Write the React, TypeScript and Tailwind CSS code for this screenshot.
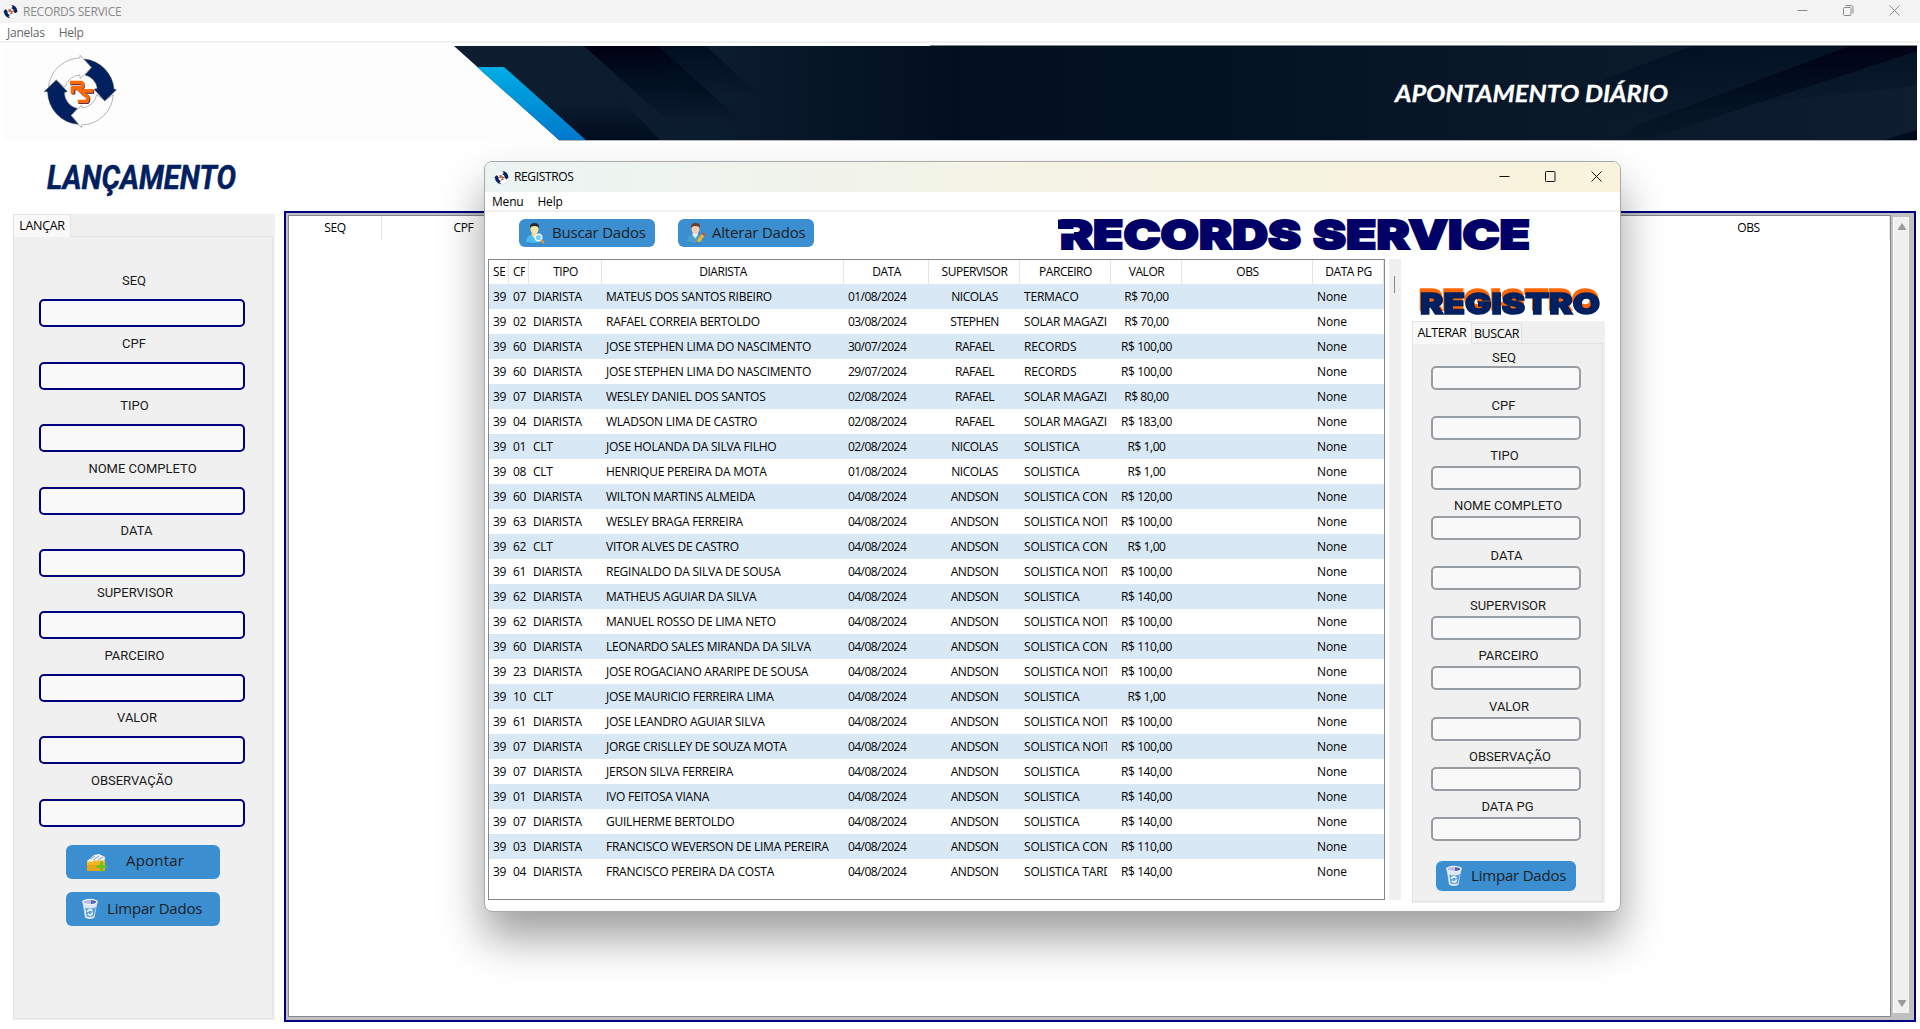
import React from "react";

const leftFields = [
  { label: "SEQ", shift: "pr-4", gap: "mb-2" },
  { label: "CPF", shift: "pr-4", gap: "mb-[7px]" },
  { label: "TIPO", shift: "pr-[15px]", gap: "mb-2" },
  { label: "NOME COMPLETO", shift: "pl-px", gap: "mb-[7px]" },
  { label: "DATA", shift: "pr-[11px]", gap: "mb-[7px]" },
  { label: "SUPERVISOR", shift: "pr-[14px]", gap: "mb-2" },
  { label: "PARCEIRO", shift: "pr-[15px]", gap: "mb-[7px]" },
  { label: "VALOR", shift: "pr-[10px]", gap: "mb-2" },
  { label: "OBSERVAÇÃO", shift: "pr-[20px]", gap: "mb-[18px]" },
];

const rightFields = [
  { label: "SEQ", shift: "pr-1", gap: "mb-2" },
  { label: "CPF", shift: "pr-[5px]", gap: "mb-2" },
  { label: "TIPO", shift: "pr-[3px]", gap: "mb-2" },
  { label: "NOME COMPLETO", shift: "pl-1", gap: "mb-2" },
  { label: "DATA", shift: "pl-px", gap: "mb-2" },
  { label: "SUPERVISOR", shift: "pl-1", gap: "mb-2" },
  { label: "PARCEIRO", shift: "pl-[5px]", gap: "mb-[9px]" },
  { label: "VALOR", shift: "pl-[6px]", gap: "mb-2" },
  { label: "OBSERVAÇÃO", shift: "pl-2", gap: "mb-2" },
  { label: "DATA PG", shift: "pl-[3px]", gap: "mb-2" },
];

const rows: string[][] = [
  ["07", "DIARISTA", "MATEUS DOS SANTOS RIBEIRO", "01/08/2024", "NICOLAS", "TERMACO", "70,00"],
  ["02", "DIARISTA", "RAFAEL CORREIA BERTOLDO", "03/08/2024", "STEPHEN", "SOLAR MAGAZI", "70,00"],
  ["60", "DIARISTA", "JOSE STEPHEN LIMA DO NASCIMENTO", "30/07/2024", "RAFAEL", "RECORDS", "100,00"],
  ["60", "DIARISTA", "JOSE STEPHEN LIMA DO NASCIMENTO", "29/07/2024", "RAFAEL", "RECORDS", "100,00"],
  ["07", "DIARISTA", "WESLEY DANIEL DOS SANTOS", "02/08/2024", "RAFAEL", "SOLAR MAGAZI", "80,00"],
  ["04", "DIARISTA", "WLADSON LIMA DE CASTRO", "02/08/2024", "RAFAEL", "SOLAR MAGAZI", "183,00"],
  ["01", "CLT", "JOSE HOLANDA DA SILVA FILHO", "02/08/2024", "NICOLAS", "SOLISTICA", "1,00"],
  ["08", "CLT", "HENRIQUE PEREIRA DA MOTA", "01/08/2024", "NICOLAS", "SOLISTICA", "1,00"],
  ["60", "DIARISTA", "WILTON MARTINS ALMEIDA", "04/08/2024", "ANDSON", "SOLISTICA CON", "120,00"],
  ["63", "DIARISTA", "WESLEY BRAGA FERREIRA", "04/08/2024", "ANDSON", "SOLISTICA NOIT", "100,00"],
  ["62", "CLT", "VITOR ALVES DE CASTRO", "04/08/2024", "ANDSON", "SOLISTICA CON", "1,00"],
  ["61", "DIARISTA", "REGINALDO DA SILVA DE SOUSA", "04/08/2024", "ANDSON", "SOLISTICA NOIT", "100,00"],
  ["62", "DIARISTA", "MATHEUS AGUIAR DA SILVA", "04/08/2024", "ANDSON", "SOLISTICA", "140,00"],
  ["62", "DIARISTA", "MANUEL ROSSO DE LIMA NETO", "04/08/2024", "ANDSON", "SOLISTICA NOIT", "100,00"],
  ["60", "DIARISTA", "LEONARDO SALES MIRANDA DA SILVA", "04/08/2024", "ANDSON", "SOLISTICA CON", "110,00"],
  ["23", "DIARISTA", "JOSE ROGACIANO ARARIPE DE SOUSA", "04/08/2024", "ANDSON", "SOLISTICA NOIT", "100,00"],
  ["10", "CLT", "JOSE MAURICIO FERREIRA LIMA", "04/08/2024", "ANDSON", "SOLISTICA", "1,00"],
  ["61", "DIARISTA", "JOSE LEANDRO AGUIAR SILVA", "04/08/2024", "ANDSON", "SOLISTICA NOIT", "100,00"],
  ["07", "DIARISTA", "JORGE CRISLLEY DE SOUZA MOTA", "04/08/2024", "ANDSON", "SOLISTICA NOIT", "100,00"],
  ["07", "DIARISTA", "JERSON SILVA FERREIRA", "04/08/2024", "ANDSON", "SOLISTICA", "140,00"],
  ["01", "DIARISTA", "IVO FEITOSA VIANA", "04/08/2024", "ANDSON", "SOLISTICA", "140,00"],
  ["07", "DIARISTA", "GUILHERME BERTOLDO", "04/08/2024", "ANDSON", "SOLISTICA", "140,00"],
  ["03", "DIARISTA", "FRANCISCO WEVERSON DE LIMA PEREIRA", "04/08/2024", "ANDSON", "SOLISTICA CON", "110,00"],
  ["04", "DIARISTA", "FRANCISCO PEREIRA DA COSTA", "04/08/2024", "ANDSON", "SOLISTICA TARD", "140,00"],
];

const headers = [
  { t: "SEQ", c: "text-left" },
  { t: "CPF", c: "text-left" },
  { t: "TIPO", c: "text-center" },
  { t: "DIARISTA", c: "text-center" },
  { t: "DATA", c: "text-center" },
  { t: "SUPERVISOR", c: "text-center" },
  { t: "PARCEIRO", c: "text-center" },
  { t: "VALOR", c: "text-center" },
  { t: "OBS", c: "text-center" },
  { t: "DATA PG", c: "text-center" },
];

const GRID = "grid grid-cols-[20px_20px_73px_242px_85px_91px_91px_71px_131px_71px]";

function Logo({ className }: { className: string }) {
  return (
    <svg className={className} viewBox="130 162 226 226">
      <g fill="#fdfdfd" stroke="#a6a6a6" strokeWidth="2.5" strokeLinejoin="round">
        <path d="M146 262 A98 98 0 0 1 241 174 L242 166 L276 203 L242 236 L241 225 A50 50 0 0 0 196 262 L170 240 Z" />
        <path d="M342 284 A98 98 0 0 1 247 376 L246 384 L214 347 L247 316 L248 325 A50 50 0 0 0 292 284 L316 303 Z" />
      </g>
      <g fill="#002060" stroke="#3c3c46" strokeWidth="1.5">
        <path d="M254 177 A100 100 0 0 1 344 268 L351 270 L316 303 L284 268 L294 266 A50 50 0 0 0 257 225 L277 203 Z" />
        <path d="M236 374 A100 100 0 0 1 144 276 L134 275 L170 241 L203 275 L194 278 A50 50 0 0 0 233 326 L214 347 Z" />
      </g>
      <g fill="none" strokeWidth="11" strokeLinejoin="round">
        <path stroke="#3a1a60" d="M213 251 H248 Q256 260 246 266 H222 V284 M238 268 L254 284 M284 276 H256 Q250 284 262 289 Q272 295 264 307 H237" />
        <path stroke="#ff6a00" d="M211 248 H246 Q256 257 245 264 H219 V282 M236 266 L252 280 M282 273 H254 Q247 282 260 287 Q270 293 262 305 H235" />
      </g>
    </svg>
  );
}

function UserIcon({ kind }: { kind: "search" | "edit" }) {
  const edit = kind === "edit";
  return (
    <svg className="h-[22px] w-5" viewBox="0 0 20 22">
      <ellipse cx="9" cy="20.6" rx="8" ry="1" fill="#2a6ca4" opacity=".5" />
      <path d="M1 20 Q1 14 6.500 13 L9 15 L12 13 Q17 14 17 20 Q9 22 1 20Z" fill={edit ? "#4b9fc9" : "#46bdf0"} />
      <path d="M6.500 13 L9.200 16.500 L12 13 L11.500 10 H7Z" fill={edit ? "#e8eef2" : "#f0d98a"} />
      <ellipse cx="9.500" cy="7" rx="4" ry="5" fill={edit ? "#f3cdb2" : "#f6e6a2"} />
      <path d="M5 6 Q4.500 1 9.500 1 Q14.500 1 14 6 Q12.500 3.800 9.500 4 Q6.500 3.800 5 6Z" fill={edit ? "#6b3a2a" : "#22282c"} />
      {edit ? (
        <g>
          <path d="M17 10.500 L19.500 12.500 L13.500 20 L11 20.800 L11.200 18Z" fill="#f7b52c" />
          <path d="M17 10.500 L19.500 12.500 L18.300 14 L15.800 12Z" fill="#c93a2c" />
          <path d="M11 20.800 L11.100 19.300 L12.400 20.300Z" fill="#333" />
        </g>
      ) : (
        <g>
          <circle cx="13.500" cy="15.500" r="3.300" fill="#6fd0f5" stroke="#eef4f8" strokeWidth="1.500" />
          <path d="M16 18 L19 21.300" stroke="#e59a35" strokeWidth="2" />
        </g>
      )}
    </svg>
  );
}

function BinIcon() {
  return (
    <svg className="h-[22px] w-[18px]" viewBox="0 0 18 22">
      <path d="M1.500 3.500 L4 19.500 Q9 22.500 13.500 19.500 L16.500 3.500Z" fill="#dfe6f2" />
      <path d="M3 9 L4.600 18 Q9 20 13 18 L15 9 Q9 12 3 9Z" fill="#5f9fd8" />
      <path d="M6.500 14 Q7 11.500 9.500 11.800 L11.500 13 M11.500 14.500 Q11 17.300 8.500 17 L6.800 15.800" stroke="#f2f7fc" strokeWidth="1.500" fill="none" />
      <ellipse cx="9" cy="3.800" rx="8" ry="3" fill="#eef0f8" />
      <ellipse cx="9" cy="3.900" rx="6.500" ry="2" fill="#b9bfe0" />
      <path d="M10 2.200 Q15.500 2.500 15.300 4.500 Q13 6 10 5.900Z" fill="#5661b0" />
      <path d="M3.500 8 L5 18" stroke="#fff" strokeWidth="1" />
    </svg>
  );
}

function FolderIcon() {
  return (
    <svg className="h-[19px] w-[21px]" viewBox="0 0 21 19">
      <path d="M1 8 L8 2 L13 1 L19 4 L18 12 H2Z" fill="#eef1f4" />
      <path d="M4 6 L9 3 M7 7 L13 3 M12 7 L17 4" stroke="#8fa3b5" strokeWidth="1" />
      <path d="M1 8.500 L6 9 L8 7.500 H19 V17 Q19 18 18 18 H2 Q1 18 1 17Z" fill="#f2b725" />
      <path d="M1 12 H19 V17 Q19 18 18 18 H2 Q1 18 1 17Z" fill="#e8a51a" />
      <path d="M15.500 8.500 V18.500 M10.500 13.500 H20.500" stroke="#6cc21c" strokeWidth="3" />
    </svg>
  );
}

function WindowControls({ color, restored }: { color: string; restored: boolean }) {
  return (
    <div className="flex items-center gap-[35px]">
      <svg className="h-[11px] w-[11px]" viewBox="0 0 11 11" stroke={color} fill="none">
        <path d="M0.500 5.500 H10.500" />
      </svg>
      <svg className="h-[11px] w-[11px]" viewBox="0 0 11 11" stroke={color} fill="none">
        {restored ? (
          <>
            <rect x="0.500" y="2.500" width="7.500" height="8" rx="1" />
            <path d="M2.500 0.500 H8 Q10 0.500 10 2.500 V8.500" />
          </>
        ) : (
          <rect x="0.500" y="0.500" width="9.500" height="10" rx="0.800" />
        )}
      </svg>
      <svg className="h-[11px] w-[11px]" viewBox="0 0 11 11" stroke={color} fill="none">
        <path d="M0.500 0.500 L10.500 10.500 M10.500 0.500 L0.500 10.500" />
      </svg>
    </div>
  );
}

function Banner() {
  return (
    <svg className="block h-[96px] w-[1914px]" viewBox="3 45 1914 96">
      <defs>
        <linearGradient id="base" x1="454" x2="1917" y1="0" y2="0" gradientUnits="userSpaceOnUse">
          <stop offset="0" stopColor="#0e1e30" />
          <stop offset=".18" stopColor="#0b1c2e" />
          <stop offset=".34" stopColor="#020f1f" />
          <stop offset=".5" stopColor="#031221" />
          <stop offset=".64" stopColor="#061626" />
          <stop offset=".8" stopColor="#0a1a2b" />
          <stop offset="1" stopColor="#0e1e30" />
        </linearGradient>
        <linearGradient id="cyan" x1="0" x2="0" y1="0" y2="1">
          <stop offset="0" stopColor="#00ade4" />
          <stop offset="1" stopColor="#0078cc" />
        </linearGradient>
        <linearGradient id="down" x1="0" x2="0" y1="0" y2="1">
          <stop offset="0" stopColor="#000012" />
          <stop offset=".5" stopColor="#000f20" stopOpacity=".85" />
          <stop offset="1" stopColor="#000f20" stopOpacity="0" />
        </linearGradient>
        <linearGradient id="soft" x1="0" x2="0" y1="0" y2="1">
          <stop offset="0" stopColor="#000e20" />
          <stop offset="1" stopColor="#000e20" stopOpacity="0" />
        </linearGradient>
        <linearGradient id="up" x1="0" x2="0" y1="1" y2="0">
          <stop offset="0" stopColor="#000d1e" />
          <stop offset="1" stopColor="#000d1e" stopOpacity="0" />
        </linearGradient>
      </defs>
      <rect x="3" y="45" width="1914" height="96" fill="#fdfdfd" />
      <path d="M454 46 H1917 V140 H559Z" fill="url(#base)" />
      <path d="M477 67 H504 L586 140 H559Z" fill="url(#cyan)" />
      <path d="M541 100 H622 L660 140 H586Z" fill="url(#up)" />
      <path d="M584 46 H658 L745 124 H671Z" fill="url(#down)" />
      <path d="M634 46 H658 L718 100 H694Z" fill="url(#down)" />
      <path d="M658 46 H706 L760 96 H714Z" fill="url(#soft)" />
      <path d="M1692 46 H1917 V86 L1600 120 L1570 92Z" fill="url(#soft)" opacity=".75" />
      <path d="M1850 46 H1917 V51 L1600 155 L1640 124Z" fill="url(#down)" opacity=".9" />
      <path d="M1884 140 L1917 130 V140Z" fill="#000c1c" />
      <path d="M930 45.500 H1917" stroke="#80858c" />
      <path d="M559 140.500 H1917" stroke="#b4b9c0" />
      <text x="1395" y="102" fill="#fff" fontFamily="Lato, sans-serif" fontWeight="700" fontStyle="italic" fontSize="23" stroke="#fff" strokeWidth=".3" textLength="273" lengthAdjust="spacingAndGlyphs">
        APONTAMENTO DIÁRIO
      </text>
    </svg>
  );
}

function HeroTitle() {
  return (
    <svg className="h-[36px] w-[480px] overflow-visible" viewBox="1056 217 480 36" fill="#000066">
      <g fontFamily="Inter, sans-serif" fontWeight="900" fontSize="40" stroke="#000066" strokeWidth="2">
        <text x="1060" y="249" textLength="241" lengthAdjust="spacingAndGlyphs">RECORDS</text>
        <text x="1313" y="249" textLength="217" lengthAdjust="spacingAndGlyphs">SERVICE</text>
      </g>
      <rect x="1058" y="219.500" width="12" height="9.500" />
      <rect x="1057" y="229" width="17" height="4.500" fill="#fff" />
    </svg>
  );
}

function RegistroTitle() {
  return (
    <svg className="block h-[30px] w-[186px] overflow-visible" viewBox="1416 286 186 30">
      <g className="drop-shadow-[-1px_-4px_0_#ff6600]" fill="#002060">
        <text x="1420" y="314" stroke="#002060" strokeWidth="1.500" fontFamily="Inter, sans-serif" fontWeight="900" fontSize="29" textLength="180" lengthAdjust="spacingAndGlyphs">
          REGISTRO
        </text>
      </g>
    </svg>
  );
}

function ActionButton({ className, children }: { className: string; children: React.ReactNode }) {
  return (
    <button className={`flex shrink-0 items-center rounded-[6px] bg-[#3b8ed0] text-[15px] leading-none tracking-[-0.200px] whitespace-nowrap text-[#1b1f24] ${className}`}>
      {children}
    </button>
  );
}

export default function App() {
  return (
    <div className="relative h-[1029px] w-[1920px] overflow-hidden bg-white font-['Open_Sans','Noto_Sans',sans-serif] text-black">
      <header className="flex h-[23px] items-center justify-between bg-[#f3f3f3] pr-5 pl-[3px]">
        <div className="flex items-center gap-[5px]">
          <Logo className="h-[15px] w-[15px]" />
          <span className="text-xs tracking-[-0.250px] text-[#8a8a8a]">RECORDS SERVICE</span>
        </div>
        <div className="-mt-[3px]">
          <WindowControls color="#8a8a8a" restored />
        </div>
      </header>
      <nav className="flex h-5 items-center gap-[14px] border-b-2 border-[#f0f0f0] pt-[2px] pl-[7px] text-xs tracking-[-0.250px] text-[#666]">
        <span>Janelas</span>
        <span>Help</span>
      </nav>
      <div className="relative mt-0.5 pl-[3px]">
        <Banner />
        <Logo className="absolute top-[9px] left-[43px] h-[75px] w-[75px]" />
      </div>
      <div className="flex h-[70px] pt-[18px] pl-[44px]">
        <svg className="h-[40px] w-[200px] overflow-visible" viewBox="44 159 200 40">
          <text x="47" y="189" fill="#002060" stroke="#002060" strokeWidth=".5" fontFamily="Roboto, sans-serif" fontWeight="700" fontStyle="italic" fontSize="34" textLength="189" lengthAdjust="spacingAndGlyphs">
            LANÇAMENTO
          </text>
        </svg>
      </div>

      <main className="flex gap-[9px] pl-[13px]">
        <aside className="mt-[3px] flex h-[806px] w-[262px] flex-col bg-[#f0f0f0]">
          <div className="z-10 flex h-[23px] w-[58px] items-center justify-center border border-b-0 border-[#e3e3e3] bg-[#f9f9f9] text-[12.500px] tracking-[-0.300px]">
            LANÇAR
          </div>
          <div className="-mt-px mr-0.5 mb-px flex flex-1 flex-col items-start border border-[#e3e3e3] pt-[35px] pl-[25px]">
            {leftFields.map((f) => (
              <div key={f.label} className={f.gap}>
                <div className={`h-[27px] w-[206px] text-center font-['Roboto'] text-[13px] leading-[18px] text-[#1a1a1a] ${f.shift}`}>
                  {f.label}
                </div>
                <div className="h-7 w-[206px] rounded-[5px] border-2 border-[#000080] bg-[#f9f9fa]" />
              </div>
            ))}
            <ActionButton className="mb-[13px] ml-[27px] h-[34px] w-[154px] pl-5">
              <FolderIcon />
              <span className="-mt-1 ml-[19px] tracking-[0.200px]">Apontar</span>
            </ActionButton>
            <ActionButton className="ml-[27px] h-[34px] w-[154px] pl-[15px]">
              <BinIcon />
              <span className="-mt-0.5 ml-[8px]">Limpar Dados</span>
            </ActionButton>
          </div>
        </aside>

        <section className="flex h-[811px] w-[1632px] border-2 border-[#000080] bg-[#c0c0c0] pt-0.5 pb-[3px] pl-0.5">
          <div className="flex h-[802px] w-[1603px] border border-[#828790] bg-white text-xs tracking-[-0.400px]">
            <div className="flex h-6 w-[93px] items-center justify-center border-r border-[#e5e5e5]">SEQ</div>
            <div className="flex h-6 w-[163px] items-center justify-center">CPF</div>
            <div className="h-6 flex-1" />
            <div className="flex h-6 w-[282px] items-center justify-center border-r border-[#e5e5e5]">OBS</div>
          </div>
          <div className="mt-0.5 ml-0.5 flex h-[796px] w-4 flex-col items-center justify-between border-l border-white bg-[#f0f0f0] py-[6px]">
            <svg className="h-[7px] w-2" viewBox="0 0 8 7" fill="#9b9b9b">
              <path d="M4 0 L8 6 V7 H0 V6Z" />
            </svg>
            <svg className="h-[7px] w-2" viewBox="0 0 8 7" fill="#9b9b9b">
              <path d="M4 7 L8 1 V0 H0 V1Z" />
            </svg>
          </div>
        </section>
      </main>

      <div className="absolute top-[161px] left-[484px] flex h-[751px] w-[1137px] flex-col overflow-hidden rounded-[8px] border border-[#a9a9a9] bg-white shadow-[0_26px_44px_rgba(0,0,0,0.38)]">
        <div className="flex h-[30px] shrink-0 items-center justify-between bg-gradient-to-r from-[#ebf4f3] via-[#f5f3e5] to-[#f9f3dc] pr-[18px] pl-[9px]">
          <div className="flex items-center gap-[5px]">
            <Logo className="h-[15px] w-[15px]" />
            <span className="text-xs tracking-[-0.350px]">REGISTROS</span>
          </div>
          <div className="-mt-0.5">
            <WindowControls color="#111" restored={false} />
          </div>
        </div>
        <div className="flex h-5 shrink-0 items-center gap-[14px] border-b-2 border-[#f0f0f0] pt-[2px] pl-[7px] text-xs tracking-[-0.200px]">
          <span>Menu</span>
          <span>Help</span>
        </div>
        <div className="flex h-[47px] shrink-0 items-start pt-[7px] pl-[34px]">
          <ActionButton className="mr-[23px] h-7 w-[136px] pl-[6px]">
            <UserIcon kind="search" />
            <span className="-mt-0.5 ml-[7px]">Buscar Dados</span>
          </ActionButton>
          <ActionButton className="h-7 w-[136px] pl-[8px]">
            <UserIcon kind="edit" />
            <span className="-mt-0.5 ml-[6px]">Alterar Dados</span>
          </ActionButton>
          <div className="-mt-0.5 ml-[242px]">
            <HeroTitle />
          </div>
        </div>
        <div className="flex pl-[3px]">
          <div className="h-[641px] w-[897px] border border-[#828790] text-xs tracking-[-0.450px] whitespace-nowrap">
            <div className={`${GRID} h-6`}>
              {headers.map((h) => (
                <div key={h.t} className="border-r border-[#e5e5e5] pr-[3px] pl-1">
                  <div className={`overflow-hidden leading-6 ${h.c}`}>{h.t}</div>
                </div>
              ))}
            </div>
            {rows.map((r, i) => (
              <div key={i} className={`${GRID} h-[25px] leading-[25px] ${i % 2 === 0 ? "bg-[#d9e8f5]" : "bg-white"}`}>
                <div className="pl-1">39</div>
                <div className="pl-1">{r[0]}</div>
                <div className="pl-1 tracking-[-0.300px]">{r[1]}</div>
                <div className="pl-1 tracking-[-0.240px]">{r[2]}</div>
                <div className="pl-1 tracking-[-0.550px]">{r[3]}</div>
                <div className="text-center">{r[4]}</div>
                <div className="mx-1 overflow-hidden tracking-[-0.200px]">{r[5]}</div>
                <div className="text-center">R$ {r[6]}</div>
                <div />
                <div className="pl-1 tracking-[-0.100px]">None</div>
              </div>
            ))}
          </div>
          <div className="ml-1 h-[641px] w-3 bg-[#f0f0f0] pt-[17px] pl-[5px]">
            <div className="h-[17px] w-px bg-[#868686]" />
          </div>
          <div className="ml-[11px] w-[193px] pt-[27px]">
            <div className="pl-1">
              <RegistroTitle />
            </div>
            <div className="mt-[5px] flex h-[582px] flex-col bg-[#f0f0f0]">
              <div className="flex h-[22px] items-end text-[12.500px] tracking-[-0.400px]">
                <div className="z-10 flex h-[23px] w-[60px] shrink-0 items-center justify-center self-start border border-b-0 border-[#e3e3e3] bg-[#f9f9f9]">ALTERAR</div>
                <div className="flex h-5 w-[50px] items-center justify-center border border-b-0 border-l-0 border-[#e3e3e3] bg-[#f3f3f3] pt-0.5">BUSCAR</div>
              </div>
              <div className="mr-0.5 mb-px flex flex-1 flex-col border border-[#e3e3e3] pt-[5px] pl-[18px]">
                {rightFields.map((f, i) => (
                  <div key={f.label} className={f.gap}>
                    <div className={`w-[150px] text-center font-['Roboto'] text-[13px] text-[#1a1a1a] ${f.shift} ${i === 0 ? "h-[17px] leading-[18px]" : "h-[18px] leading-4"}`}>
                      {f.label}
                    </div>
                    <div className="h-6 w-[150px] rounded-[5px] border-2 border-[#979da2] bg-[#f9f9fa]" />
                  </div>
                ))}
                <ActionButton className="mt-[12px] ml-[5px] h-[30px] w-[140px] pl-[9px]">
                  <BinIcon />
                  <span className="-mt-0.5 ml-[8px]">Limpar Dados</span>
                </ActionButton>
              </div>
            </div>
          </div>
        </div>
      </div>
    </div>
  );
}
